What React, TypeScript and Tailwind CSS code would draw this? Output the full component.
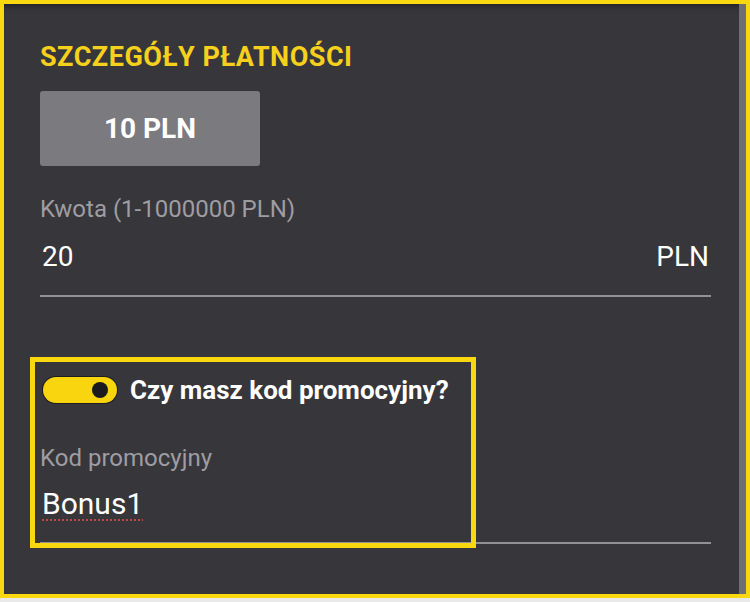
export default function App() {
    return (
        <div className="relative w-[750px] h-[602px] bg-[#e9e9e9]" style={{ fontFamily: 'Roboto, "Noto Sans", sans-serif' }}>
            <div className="h-[598px] border-4 border-[#f9d80f] bg-[#37363b] flex shadow-[inset_0_7px_6px_-5px_rgba(0,0,0,0.45)]">
                <div className="flex-1 pl-[36px] pr-[28px] pt-[38px] flex flex-col">
                    <h2 className="text-[27px] leading-[30px] tracking-[0.5px] font-bold text-[#f5d11d]">SZCZEGÓŁY PŁATNOŚCI</h2>

                    {/* amount button */}
                    <button className="mt-[19px] w-[220px] h-[75px] rounded-[3px] bg-[#7b7a7f] text-white text-[28px] leading-[32px] font-bold">
                        10 PLN
                    </button>

                    {/* amount field */}
                    <div className="mt-[29px] text-[24px] leading-[28px] text-[#9e9da2]">Kwota (1-1000000 PLN)</div>
                    <div className="mt-[17px] flex justify-between text-[28px] leading-[33px] text-white pl-[2px] pr-[2px]">
                        <span>20</span>
                        <span>PLN</span>
                    </div>
                    <div className="mt-[22px] h-[2px] bg-[#929195]" />

                    {/* promo toggle */}
                    <div className="mt-[78px] flex items-center">
                        <div className="ml-[3px] w-[74px] h-[26px] rounded-full bg-[#f9d50f] ring-1 ring-[#1e1d22] flex items-center justify-end pr-[9px]">
                            <div className="w-4 h-4 rounded-full bg-[#1b1a1f]" />
                        </div>
                        <span className="ml-[13px] text-[26px] leading-[30px] font-bold text-white">Czy masz kod promocyjny?</span>
                    </div>

                    <div className="mt-[39px] text-[24px] leading-[28px] text-[#9e9da2]">Kod promocyjny</div>
                    <div className="mt-[14px] text-[30px] leading-[35px] text-white pl-[2px]">
                        <span className="underline decoration-dotted decoration-[#c04848] decoration-2 underline-offset-[5px]">Bonus1</span>
                    </div>
                    <div className="mt-[21px] h-[2px] bg-[#929195]" />
                </div>
                <div className="w-[7px] bg-[#6f6e72]" />
            </div>

            {/* highlight frame */}
            <div className="absolute left-[30px] top-[357px] w-[446px] h-[191px] border-[5px] border-[#f9d80f]" />
        </div>
    );
}
